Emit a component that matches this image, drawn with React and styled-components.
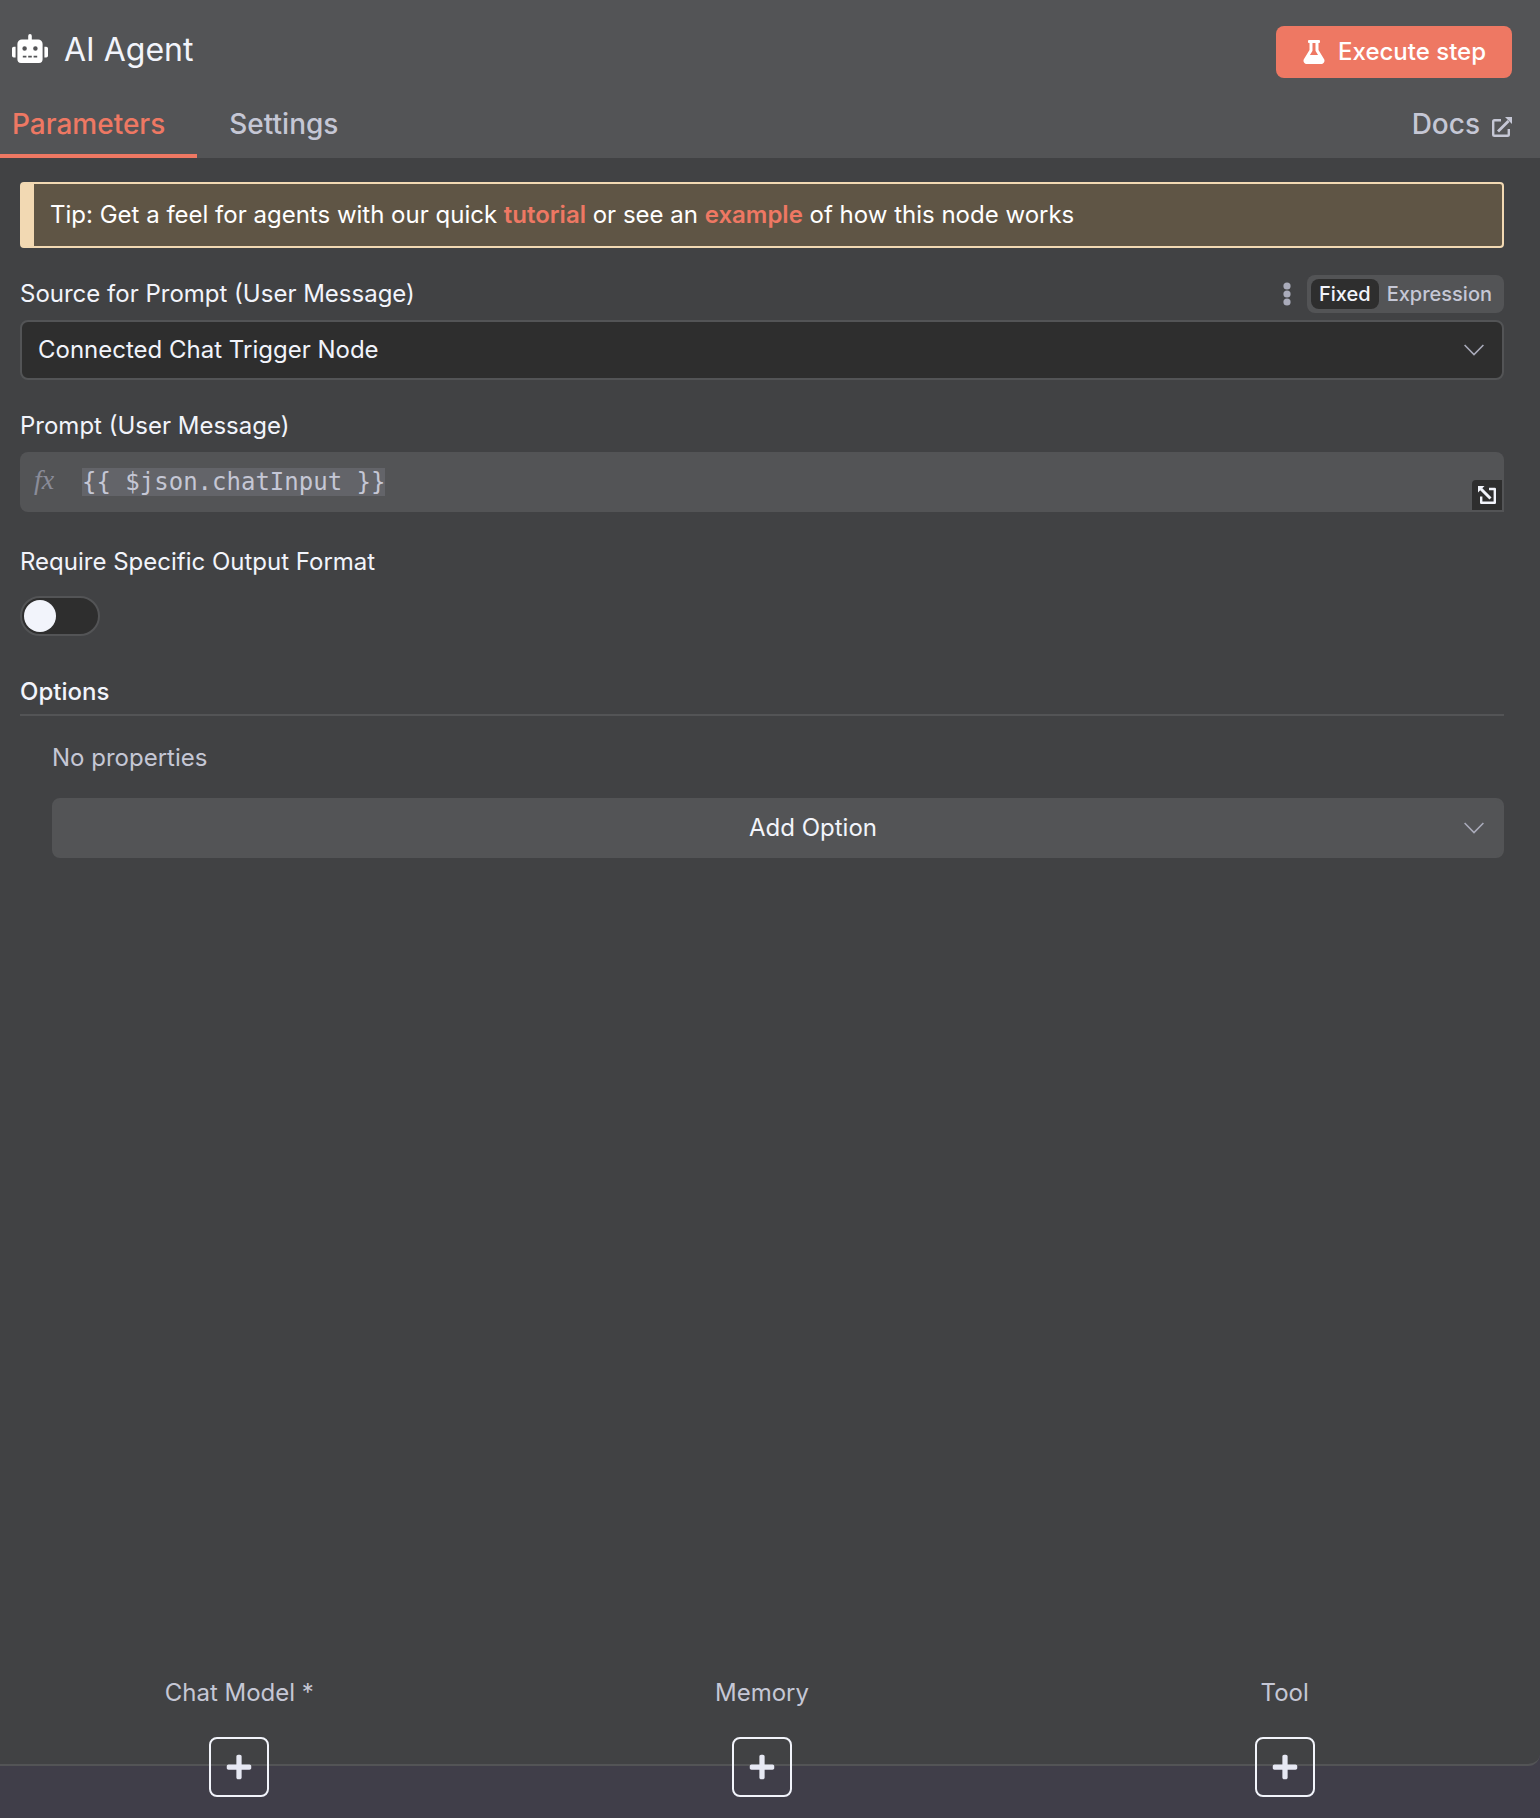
import React, { useState } from "react";
import styled, { createGlobalStyle, css } from "styled-components";
import { FaRobot, FaFlask, FaPlus } from "react-icons/fa";

const color = {
  panel: "#414244",
  raised: "#535456",
  well: "#2e2e2e",
  canvas: "#403e49",
  accent: "#ee7863",
  text: "#f2f4fb",
  muted: "#c5c7d5",
  faint: "#8a8c99",
  tip: "#5f5545",
  tipEdge: "#f2d9b3",
};

const GlobalStyle = createGlobalStyle`
  *, *::before, *::after { box-sizing: border-box; }
  body {
    margin: 0;
    background: ${color.canvas};
    color: ${color.text};
    font-family: Inter, "Liberation Sans", sans-serif;
    font-size: 24px;
    line-height: 32px;
  }
  button, input, select { font: inherit; color: inherit; }
`;

const Page = styled.div`
  display: flex;
  flex-direction: column;
  min-height: 100vh;
  padding-bottom: 52px;
`;

const Panel = styled.main`
  flex: 1;
  display: flex;
  flex-direction: column;
  background: ${color.panel};
  border-bottom: 2px solid ${color.raised};
  border-bottom-right-radius: 12px;
`;

const Header = styled.header`
  background: ${color.raised};
`;

const TitleBar = styled.div`
  display: flex;
  align-items: flex-start;
  justify-content: space-between;
  padding: 26px 28px 0 12px;
`;

const Title = styled.h1`
  display: flex;
  align-items: center;
  gap: 16px;
  margin: 0;
  font-size: 32px;
  font-weight: 400;
  line-height: 48px;

  svg {
    width: 36px;
    height: 32px;
    padding-bottom: 3px;
    color: #fff;
  }
`;

const ExecuteButton = styled.button`
  display: flex;
  align-items: center;
  gap: 12px;
  height: 52px;
  padding: 0 26px;
  border: 0;
  border-radius: 8px;
  background: ${color.accent};
  color: #fff;
  font-weight: 500;
  cursor: pointer;

  svg {
    width: 24px;
    height: 24px;
  }
`;

const TabBar = styled.nav`
  display: flex;
  height: 80px;
  padding-right: 28px;
`;

const TabLink = styled.a`
  display: flex;
  align-items: center;
  gap: 12px;
  padding: 28px ${(p) => (p.$end ? 0 : 32)}px 12px ${(p) => (p.$first ? 12 : 32)}px;
  margin-left: ${(p) => (p.$end ? "auto" : 0)};
  border-bottom: 4px solid ${(p) => (p.$active ? color.accent : "transparent")};
  color: ${(p) => (p.$active ? color.accent : color.muted)};
  font-size: 28px;
  font-weight: 500;
  text-decoration: none;
`;

const Parameters = styled.form`
  flex: 1;
  display: flex;
  flex-direction: column;
  padding: 24px 36px 0 20px;
`;

const Tip = styled.p`
  margin: 0 0 26px;
  padding: 15px 16px;
  border: 2px solid ${color.tipEdge};
  border-left-width: 14px;
  border-radius: 4px;
  background: ${color.tip};
  color: #fff;

  a {
    color: ${color.accent};
    font-weight: 600;
    text-decoration: none;
  }
`;

const LabelRow = styled.div`
  display: flex;
  align-items: center;
  justify-content: space-between;
  height: 40px;
  margin-bottom: ${(p) => (p.$roomy ? 14 : 6)}px;
`;

const Label = styled.label``;

const Tools = styled.div`
  display: flex;
  align-items: center;
  gap: 16px;
`;

const MenuButton = styled.button`
  display: flex;
  padding: 4px 0;
  border: 0;
  background: none;
  color: #a9abba;
`;

const ModeSwitch = styled.div`
  display: flex;
  padding: 4px;
  border-radius: 8px;
  background: ${color.raised};
`;

const ModeButton = styled.button`
  height: 30px;
  padding: 0 8px;
  border: 0;
  border-radius: 8px;
  background: ${(p) => (p.$active ? color.well : "transparent")};
  color: ${(p) => (p.$active ? color.text : color.muted)};
  font-size: 20px;
  font-weight: 500;
  line-height: 28px;
`;

const SelectBox = styled.div`
  display: grid;
  align-items: center;

  > * {
    grid-area: 1 / 1;
  }

  svg {
    justify-self: end;
    margin-right: 20px;
    color: #a9abba;
    pointer-events: none;
  }
`;

const Select = styled.select`
  appearance: none;
  width: 100%;
  height: 60px;
  border: 2px solid ${color.raised};
  border-radius: 8px;
  ${(p) =>
    p.$centered
      ? css`
          padding: 0 16px 0 86px;
          background: ${color.raised};
          text-align-last: center;
        `
      : css`
          padding: 0 16px;
          background: ${color.well};
        `}
`;

const Field = styled.div`
  margin-bottom: ${(p) => p.$gap}px;
`;

const Expression = styled.div`
  display: flex;
  height: 60px;
  padding: 0 2px 2px 0;
  border-radius: 8px 8px 0 8px;
  background: ${color.raised};
`;

const FxMark = styled.span`
  width: 62px;
  padding: 12px 0 0 14px;
  color: ${color.faint};
  font: italic 28px/32px "Liberation Serif", serif;
`;

const Code = styled.code`
  flex: 1;
  padding-top: 14px;
  color: ${color.muted};
  font-family: "DejaVu Sans Mono", monospace;

  span {
    background: #636469;
  }
`;

const ExpandButton = styled.button`
  display: flex;
  align-items: center;
  justify-content: center;
  align-self: flex-end;
  width: 30px;
  height: 30px;
  padding: 0;
  border: 0;
  border-radius: 4px 0 0 0;
  background: ${color.well};
`;

const Switch = styled.input`
  appearance: none;
  display: block;
  width: 80px;
  height: 40px;
  margin: 0;
  padding: 2px;
  border: 2px solid ${color.raised};
  border-radius: 20px;
  background: ${color.well};
  cursor: pointer;

  &::before {
    content: "";
    display: block;
    width: 32px;
    height: 32px;
    border-radius: 50%;
    background: ${color.text};
  }

  &:checked::before {
    margin-left: auto;
  }
`;

const SectionTitle = styled.h2`
  margin: 0;
  padding-bottom: 6px;
  border-bottom: 2px solid ${color.raised};
  font-size: 24px;
  font-weight: 500;
  line-height: 32px;
`;

const Collection = styled.div`
  padding: 26px 0 0 32px;
`;

const Empty = styled.p`
  margin: 0 0 24px;
  color: ${color.muted};
`;

const Connections = styled.div`
  display: grid;
  grid-template-columns: repeat(3, 1fr);
  margin: 0 -6px -33px -22px;
`;

const Connection = styled.div`
  display: flex;
  flex-direction: column;
  align-items: center;
  gap: 28px;
  color: ${color.muted};
`;

const AddButton = styled.button`
  display: flex;
  align-items: center;
  justify-content: center;
  width: 60px;
  height: 60px;
  padding: 0;
  border: 2px solid ${color.text};
  border-radius: 8px;
  background: none;
  color: #e6e8f3;

  svg {
    width: 28px;
    height: 28px;
  }
`;

const Chevron = () => (
  <svg width="20" height="12" viewBox="0 0 20 12" fill="none" stroke="currentColor" strokeWidth="1.6" aria-hidden="true">
    <path d="M0.600 1L10 10.500L19.400 1" />
  </svg>
);

const Dots = () => (
  <svg width="8" height="24" viewBox="0 0 8 24" fill="currentColor" aria-hidden="true">
    <circle cx="4" cy="4" r="3.6" />
    <circle cx="4" cy="12" r="3.6" />
    <circle cx="4" cy="20" r="3.6" />
  </svg>
);

const OpenIcon = () => (
  <svg width="20" height="25" viewBox="0 -5 20 25" fill="none" stroke="currentColor" strokeWidth="2.4" aria-hidden="true">
    <path d="M9 3.200H2.500Q1.200 3.200 1.200 4.500V17.500Q1.200 18.800 2.500 18.800H15.500Q16.800 18.800 16.800 17.500V12" />
    <path d="M6 14.500L16.500 4" strokeWidth="2.800" />
    <path d="M13 0h7v7z" fill="currentColor" stroke="none" />
  </svg>
);

const ExpandIcon = () => (
  <svg width="18" height="18" viewBox="0 0 18 18" fill="none" stroke={color.text} strokeWidth="2.4" aria-hidden="true">
    <path d="M11 3h5.800v13.800H3.200v-6.300" strokeLinejoin="round" />
    <path d="M3 3l9.500 9.500" strokeWidth="3" />
    <path d="M0 0h6.500L0 6.500z" fill={color.text} stroke="none" />
  </svg>
);

const connections = ["Chat Model *", "Memory", "Tool"];

export default function App() {
  const [mode, setMode] = useState("Fixed");

  return (
    <Page>
      <GlobalStyle />
      <Panel>
        <Header>
          <TitleBar>
            <Title>
              <FaRobot aria-hidden="true" />
              AI Agent
            </Title>
            <ExecuteButton type="button">
              <FaFlask aria-hidden="true" />
              Execute step
            </ExecuteButton>
          </TitleBar>
          <TabBar>
            <TabLink href="#parameters" $first $active>
              Parameters
            </TabLink>
            <TabLink href="#settings">Settings</TabLink>
            <TabLink href="#docs" $end>
              Docs
              <OpenIcon />
            </TabLink>
          </TabBar>
        </Header>

        <Parameters>
          <Tip>
            Tip: Get a feel for agents with our quick <a href="#tutorial">tutorial</a> or see an{" "}
            <a href="#example">example</a> of how this node works
          </Tip>

          <Field $gap={26}>
            <LabelRow>
              <Label htmlFor="source">Source for Prompt (User Message)</Label>
              <Tools>
                <MenuButton type="button" aria-label="Parameter options">
                  <Dots />
                </MenuButton>
                <ModeSwitch>
                  {["Fixed", "Expression"].map((name) => (
                    <ModeButton
                      key={name}
                      type="button"
                      $active={mode === name}
                      aria-pressed={mode === name}
                      onClick={() => setMode(name)}
                    >
                      {name}
                    </ModeButton>
                  ))}
                </ModeSwitch>
              </Tools>
            </LabelRow>
            <SelectBox>
              <Select id="source">
                <option>Connected Chat Trigger Node</option>
              </Select>
              <Chevron />
            </SelectBox>
          </Field>

          <Field $gap={30}>
            <LabelRow>
              <Label as="span" id="prompt-label">
                Prompt (User Message)
              </Label>
            </LabelRow>
            <Expression role="group" aria-labelledby="prompt-label">
              <FxMark>fx</FxMark>
              <Code>
                <span>{"{{ $json.chatInput }}"}</span>
              </Code>
              <ExpandButton type="button" aria-label="Open expression editor">
                <ExpandIcon />
              </ExpandButton>
            </Expression>
          </Field>

          <Field $gap={40}>
            <LabelRow $roomy>
              <Label htmlFor="format">Require Specific Output Format</Label>
            </LabelRow>
            <Switch id="format" type="checkbox" role="switch" />
          </Field>

          <SectionTitle>Options</SectionTitle>
          <Collection>
            <Empty>No properties</Empty>
            <SelectBox>
              <Select $centered aria-label="Add Option">
                <option>Add Option</option>
              </Select>
              <Chevron />
            </SelectBox>
          </Collection>
        </Parameters>

        <Connections>
          {connections.map((name) => (
            <Connection key={name}>
              {name}
              <AddButton type="button" aria-label={`Add ${name}`}>
                <FaPlus aria-hidden="true" />
              </AddButton>
            </Connection>
          ))}
        </Connections>
      </Panel>
    </Page>
  );
}
